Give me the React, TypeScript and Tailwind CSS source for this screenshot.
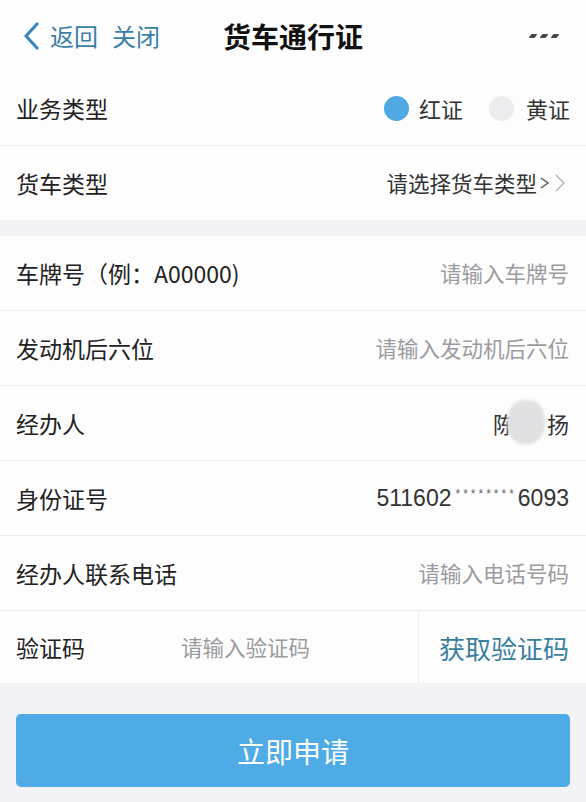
import React from "react";

const font = { fontFamily: '"Noto Sans CJK SC", "Noto Sans", sans-serif' };

function Row({ label, children, last }: { label: string; children?: React.ReactNode; last?: boolean }) {
  return (
    <div className={`flex h-[75px] items-center justify-between bg-[#fdfdfe] pl-4 pr-[17px] ${last ? "" : "border-b border-[#ececef]"}`}>
      <span className="text-[23px] text-[#222]">{label}</span>
      <div className="flex items-center">{children}</div>
    </div>
  );
}

export default function App() {
  return (
    <div className="flex min-h-[802px] w-[586px] flex-col bg-[#f3f3f6]" style={font}>
      {/* header */}
      <div className="relative flex h-[72px] items-center bg-[#fdfdfe] px-[22px]">
        <div className="flex items-center text-[24px] text-[#3b7fa8]">
          <svg width="18" height="28" viewBox="0 0 18 28" className="mr-[10px]">
            <path d="M15 2 L4 14 L15 26" fill="none" stroke="#3a86bd" strokeWidth="3.2" strokeLinecap="round" strokeLinejoin="round" />
          </svg>
          <span>返回</span>
          <span className="ml-[14px]">关闭</span>
        </div>
        <div className="absolute left-0 right-0 top-0 flex h-[72px] items-center justify-center pointer-events-none">
          <span className="text-[28px] font-bold text-[#111]">货车通行证</span>
        </div>
        <div className="ml-auto mr-[6px] flex items-center gap-[5px]">
          {[0, 1, 2].map((i) => (
            <span key={i} className="block h-[4px] w-[6px] -skew-x-[35deg] rounded-[1px] bg-[#444]" />
          ))}
        </div>
      </div>

      {/* section 1 */}
      <div className="flex h-[74px] items-center justify-between border-b border-[#ececef] bg-[#fdfdfe] pl-4 pr-[16px]">
        <span className="text-[23px] text-[#222]">业务类型</span>
        <div className="flex items-center text-[22px] text-[#333]">
          <span className="block h-[25px] w-[25px] rounded-full bg-[#4ea8e2]" />
          <span className="ml-[10px]">红证</span>
          <span className="ml-[26px] block h-[25px] w-[25px] rounded-full bg-[#ececee]" />
          <span className="ml-[12px]">黄证</span>
        </div>
      </div>
      <div className="flex h-[74px] items-center justify-between bg-[#fdfdfe] pl-4 pr-[18px]">
        <span className="text-[23px] text-[#222]">货车类型</span>
        <div className="flex items-center text-[21.5px] text-[#333]">
          <span>请选择货车类型</span>
          <svg width="30" height="22" viewBox="0 0 30 22" className="ml-[1px]">
            <path d="M3 6 L10 11 L3 16" fill="none" stroke="#555" strokeWidth="1.4" />
            <path d="M18 3 L26 11 L18 19" fill="none" stroke="#aaa" strokeWidth="1.2" />
          </svg>
        </div>
      </div>

      <div className="h-[16px]" />

      {/* section 2 */}
      <Row label="车牌号（例：A00000)">
        <span className="text-[21.5px] text-[#9b9b9f]">请输入车牌号</span>
      </Row>
      <Row label="发动机后六位">
        <span className="text-[21.5px] text-[#9b9b9f]">请输入发动机后六位</span>
      </Row>
      <Row label="经办人">
        <div className="relative flex items-center text-[22px] text-[#333]">
          <span>陈</span>
          <span className="w-[32px]" />
          <span>扬</span>
          <span className="absolute left-[14px] top-[-7px] h-[44px] w-[38px] rounded-[45%] bg-[#e0e0e2] blur-[1.5px]" />
        </div>
      </Row>
      <Row label="身份证号">
        <div className="flex items-baseline text-[23px] text-[#333]" style={{ fontFamily: '"Liberation Sans", Arial, sans-serif' }}>
          <span>511602</span>
          <span className="relative top-[-8px] ml-[4px] mr-[1px] text-[12px] tracking-[3px] text-[#666]">********</span>
          <span>6093</span>
        </div>
      </Row>
      <Row label="经办人联系电话">
        <span className="text-[21.5px] text-[#9b9b9f]">请输入电话号码</span>
      </Row>
      <div className="flex h-[72px] items-stretch bg-[#fdfdfe]">
        <div className="flex flex-1 items-center pl-4">
          <span className="w-[165px] text-[23px] text-[#222]">验证码</span>
          <span className="text-[21.5px] text-[#9b9b9f]">请输入验证码</span>
        </div>
        <div className="flex w-[168px] items-center justify-end border-l border-[#ececef] pr-[17px]">
          <span className="text-[26px] text-[#3b7f9e]">获取验证码</span>
        </div>
      </div>

      {/* button */}
      <div className="px-4 pt-[31px]">
        <button className="flex h-[73px] w-full items-center justify-center rounded-[5px] bg-[#4fabe6] text-[28px] text-white">
          立即申请
        </button>
      </div>
    </div>
  );
}
